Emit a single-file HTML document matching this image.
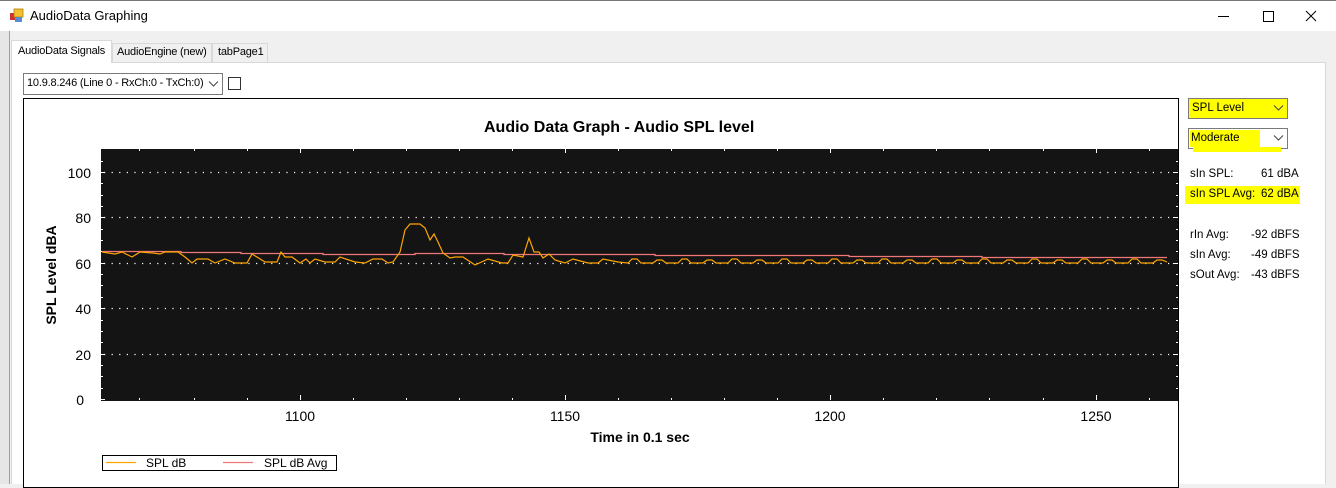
<!DOCTYPE html>
<html><head><meta charset="utf-8"><style>
*{margin:0;padding:0;box-sizing:border-box}
body{width:1336px;height:484px;overflow:hidden;background:#f0f0f0;font-family:"Liberation Sans",Arial,sans-serif;position:relative;font-size:11.5px;color:#000}
.a{position:absolute;white-space:nowrap}
.t{font-size:11px;letter-spacing:-0.2px}
</style></head><body>
<div class="a" style="left:0;top:0;width:1336px;height:1px;background:#777"></div>
<div class="a" style="left:0;top:1px;width:1336px;height:30px;background:#fff"></div>
<svg class="a" style="left:9px;top:8px" width="16" height="16"><rect x="1" y="5" width="6" height="7" fill="#c33"/><rect x="5" y="1" width="9" height="8" fill="#f4c030" stroke="#b08000" stroke-width="0.8"/><rect x="6" y="9" width="7" height="5" fill="#5a8ad0"/></svg>
<div class="a" style="left:30px;top:8px;font-size:13px">AudioData Graphing</div>
<svg class="a" style="left:1210px;top:8px" width="110" height="16" fill="none" stroke="#000" stroke-width="1"><line x1="8" y1="8.5" x2="19" y2="8.5"/><rect x="53.5" y="3.5" width="10" height="10"/><path d="M96 3L106 13M106 3L96 13"/></svg>
<div class="a" style="left:0;top:31px;width:10px;height:453px;background:#e6e6e6;border-right:1px solid #a0a0a0"></div>
<!-- tabs -->
<div class="a t" style="left:11px;top:40px;width:101px;height:23px;background:#fff;border:1px solid #d9d9d9;border-bottom:none;padding:4px 0 0 6px">AudioData Signals</div>
<div class="a t" style="left:112px;top:43px;width:100px;height:19px;background:#f0f0f0;border:1px solid #d9d9d9;border-bottom:none;padding:2px 0 0 4px">AudioEngine (new)</div>
<div class="a t" style="left:212px;top:43px;width:56px;height:19px;background:#f0f0f0;border:1px solid #d9d9d9;border-bottom:none;padding:2px 0 0 5px">tabPage1</div>
<div class="a" style="left:11px;top:62px;width:1315px;height:422px;background:#fff;border:1px solid #d9d9d9;border-bottom:none"></div>
<div class="a" style="left:12px;top:61px;width:99px;height:3px;background:#fff"></div>
<!-- combo -->
<div class="a t" style="left:23px;top:73px;width:200px;height:22px;border:1px solid #7a7a7a;background:#fff;padding:3px 0 0 3px;overflow:hidden">10.9.8.246 (Line 0 - RxCh:0 - TxCh:0)</div>
<svg class="a" style="left:208px;top:80px;background:#fff" width="12" height="8"><path d="M1 1.5L5.5 6L10 1.5" fill="none" stroke="#444"/></svg>
<div class="a" style="left:228px;top:77px;width:13px;height:13px;border:1px solid #333;background:#fff"></div>
<!-- chart panel -->
<div class="a" style="left:23px;top:98px;width:1156px;height:390px;border:1px solid #000;background:#fff"></div>
<div class="a" style="left:484px;top:119px;width:267px;text-align:center;font-weight:bold;font-size:16px">Audio Data Graph - Audio SPL level</div>
<svg class="a" style="left:0;top:0" width="1336" height="484" font-family="Liberation Sans, Arial, sans-serif">
<rect x="101" y="149" width="1077" height="252" fill="#141414"/>
<g stroke="#fff" stroke-width="1.2" stroke-dasharray="1.2 6.4">
<line x1="104" y1="172.5" x2="1172" y2="172.5"/><line x1="104" y1="217.5" x2="1172" y2="217.5"/><line x1="104" y1="263.5" x2="1172" y2="263.5"/><line x1="104" y1="308.5" x2="1172" y2="308.5"/><line x1="104" y1="354.5" x2="1172" y2="354.5"/>
</g>
<g stroke="#fff" stroke-width="1">
<path d="M101 172.5h4M101 217.5h4M101 263.5h4M101 308.5h4M101 354.5h4M101 399.5h4M101 161.5h2M101 183.5h2M101 195.5h2M101 206.5h2M101 229.5h2M101 240.5h2M101 251.5h2M101 274.5h2M101 285.5h2M101 297.5h2M101 320.5h2M101 331.5h2M101 342.5h2M101 365.5h2M101 376.5h2M101 388.5h2"/>
<path d="M1178 172.5h-5M1178 217.5h-5M1178 263.5h-5M1178 308.5h-5M1178 354.5h-5M1178 161.5h-2M1178 183.5h-2M1178 195.5h-2M1178 206.5h-2M1178 229.5h-2M1178 240.5h-2M1178 251.5h-2M1178 274.5h-2M1178 285.5h-2M1178 297.5h-2M1178 320.5h-2M1178 331.5h-2M1178 342.5h-2M1178 365.5h-2M1178 376.5h-2M1178 388.5h-2"/>
<path d="M300.5 400v-5M565.5 400v-5M830.5 400v-5M1096.5 400v-5M300.5 149v4M565.5 149v4M830.5 149v4M1096.5 149v4"/>
<path d="M139.5 400v-2M194.5 400v-2M247.5 400v-2M353.5 400v-2M406.5 400v-2M459.5 400v-2M512.5 400v-2M618.5 400v-2M671.5 400v-2M724.5 400v-2M777.5 400v-2M883.5 400v-2M936.5 400v-2M989.5 400v-2M1043.5 400v-2M1149.5 400v-2M139.5 149v2M194.5 149v2M247.5 149v2M353.5 149v2M406.5 149v2M459.5 149v2M512.5 149v2M618.5 149v2M671.5 149v2M724.5 149v2M777.5 149v2M883.5 149v2M936.5 149v2M989.5 149v2M1043.5 149v2M1149.5 149v2"/>
</g>
<polyline fill="none" stroke="#f07878" stroke-width="1.3" points="102,251.5 181,251.5 181,252.5 241,252.5 241,253.5 323,253.5 323,254.5 415,254.5 415,253.5 504,253.5 504,254.5 655,254.5 655,255.5 849,255.5 849,256.5 982,256.5 982,257.5 1167,257.5"/>
<polyline fill="none" stroke="#ffa500" stroke-width="1.2" points="102,252 115,254 122,252 132,257 140,252 153,253 160,254 165,252 178,252 185,257 192,263 197,259 208,259 215,263 225,259 235,263 247,263 252,254 265,262 277,262 281,252 285,257 292,257 300,263 306,259 310,263 315,259 325,262 335,262 340,257 355,262 365,263 373,259 382,259 388,263 393,262 400,252 405,230 410,224 420,224 425,228 430,240 434,234 438,242 443,253 450,258 455,257 463,257 475,265 488,259 502,263 508,263 513,255 523,257 529,238 534,252 539,252 543,258 549,254 555,260 565,263 573,259 588,263 598,263 603,259 618,262 628,263 632,259 637,259 641,263 653,263 657,260 662,260 666,263 678,263 682,259 687,259 691,263 703,263 707,260 712,260 716,263 728,263 732,259 737,259 741,263 753,263 757,260 762,260 766,263 778,263 782,259 787,259 791,263 803,263 807,260 812,260 816,263 828,263 832,259 837,259 841,263 853,263 857,260 862,260 866,263 878,263 882,259 887,259 891,263 903,263 907,260 912,260 916,263 928,263 932,259 937,259 941,263 953,263 957,260 962,260 966,263 978,263 982,259 987,259 991,263 1003,263 1007,260 1012,260 1016,263 1028,263 1032,259 1037,259 1041,263 1053,263 1057,260 1062,260 1066,263 1078,263 1082,259 1087,259 1091,263 1103,263 1107,260 1112,260 1116,263 1128,263 1132,259 1137,259 1141,263 1153,263 1157,260 1162,260 1167,262"/>
<g font-size="14" text-anchor="end" fill="#000">
<text x="91" y="178">100</text><text x="91" y="223">80</text><text x="91" y="269">60</text><text x="91" y="314">40</text><text x="91" y="360">20</text><text x="84" y="405">0</text>
</g>
<g font-size="14" text-anchor="middle"><text x="300" y="421">1100</text><text x="565" y="421">1150</text><text x="830" y="421">1200</text><text x="1096" y="421">1250</text></g>
<text x="640" y="442" font-size="14" font-weight="bold" text-anchor="middle">Time in 0.1 sec</text>
<text transform="translate(56,275) rotate(-90)" font-size="14" font-weight="bold" text-anchor="middle">SPL Level dBA</text>
<rect x="102.5" y="455.5" width="234" height="15" fill="#fff" stroke="#000"/>
<line x1="106" y1="462.5" x2="136" y2="462.5" stroke="#ffa500" stroke-width="1.2"/>
<line x1="223" y1="462.5" x2="253" y2="462.5" stroke="#f07878" stroke-width="1.2"/>
<text x="146" y="467" font-size="12">SPL dB</text><text x="264" y="467" font-size="12">SPL dB Avg</text>
</svg>
<!-- right panel -->
<div class="a" style="left:1188px;top:98px;width:100px;height:21px;border:1px solid #7a7a7a;background:#ffff00;padding:3px 0 0 3px">SPL Level</div>
<svg class="a" style="left:1273px;top:104px" width="12" height="8"><path d="M1 1.5L5.5 6L10 1.5" fill="none" stroke="#444"/></svg>
<div class="a" style="left:1188px;top:128px;width:100px;height:21px;border:1px solid #7a7a7a;background:#fff"></div>
<div class="a" style="left:1190px;top:130px;width:70px;height:17px;background:#ffff00;padding:2px 0 0 1px">Moderate</div>
<div class="a" style="left:1193px;top:147px;width:88px;height:5px;background:#ffff00"></div>
<svg class="a" style="left:1273px;top:134px" width="12" height="8"><path d="M1 1.5L5.5 6L10 1.5" fill="none" stroke="#444"/></svg>
<div class="a" style="left:1185px;top:186px;width:115px;height:18px;background:#ffff00"></div>
<div class="a" style="left:1190px;top:168px">sIn SPL:</div><div class="a" style="left:1261px;top:168px">61 dBA</div>
<div class="a" style="left:1190px;top:188px">sIn SPL Avg:</div><div class="a" style="left:1261px;top:188px">62 dBA</div>
<div class="a" style="left:1190px;top:229px">rIn Avg:</div><div class="a" style="left:1251px;top:229px">-92 dBFS</div>
<div class="a" style="left:1190px;top:249px">sIn Avg:</div><div class="a" style="left:1251px;top:249px">-49 dBFS</div>
<div class="a" style="left:1190px;top:269px">sOut Avg:</div><div class="a" style="left:1251px;top:269px">-43 dBFS</div>
</body></html>
